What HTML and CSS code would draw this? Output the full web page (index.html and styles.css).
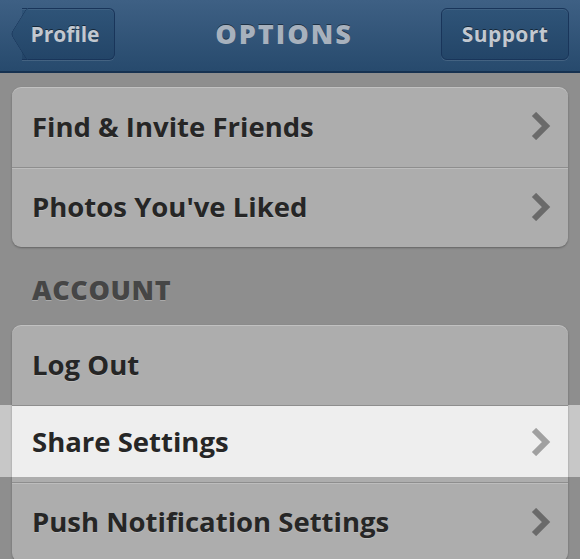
FILE: index.html
```html
<!DOCTYPE html>
<html lang="en">
<head>
  <meta charset="UTF-8">
  <title>Options</title>
  <link rel="stylesheet" href="styles.css">
</head>
<body>

  <!-- Header -->
  <div class="header">
    <button class="back-button">Profile</button>
    <div class="header-title">OPTIONS</div>
    <button class="nav-button">Support</button>
  </div>

  <!-- Main Content -->
  <div class="main">
    <div class="card">
      <div class="row">Find &amp; Invite Friends
        <svg class="chevron" viewBox="0 0 20 28"><polyline points="3,2 15,14 3,26"/></svg>
      </div>
      <div class="row">Photos You've Liked
        <svg class="chevron" viewBox="0 0 20 28"><polyline points="3,2 15,14 3,26"/></svg>
      </div>
    </div>

    <h3 class="section-title">ACCOUNT</h3>

    <div class="card">
      <div class="row">Log Out</div>
      <div class="row active">Share Settings
        <svg class="chevron" viewBox="0 0 20 28"><polyline points="3,2 15,14 3,26"/></svg>
      </div>
      <div class="row">Push Notification Settings
        <svg class="chevron" viewBox="0 0 20 28"><polyline points="3,2 15,14 3,26"/></svg>
      </div>
    </div>
  </div>

</body>
</html>
```

FILE: styles.css
```css
* {
  box-sizing: border-box;
  margin: 0;
  padding: 0;
}

body {
  font-family: 'Open Sans', Arial, sans-serif;
  background: #8e8e8e;
  height: 559px;
  overflow: hidden;
}

.header {
  height: 73px;
  background: linear-gradient(#3e6084, #274a6d);
  border-bottom: 2px solid #163150;
  display: flex;
  justify-content: space-between;
  align-items: center;
  padding: 0 11px 4px 10px;
}

.header-title {
  font-size: 27px;
  font-weight: 800;
  color: #a7b1bd;
  letter-spacing: 2px;
  text-shadow: 0 -1px 0 rgba(0, 0, 0, 0.45);
  margin-left: 12px;
}

.back-button,
.nav-button {
  font-family: inherit;
  font-size: 21px;
  font-weight: 700;
  color: #c2c8d0;
  text-shadow: 0 -1px 0 rgba(0, 0, 0, 0.5);
  background: linear-gradient(#2f5478, #234568);
  border: 1px solid #19355a;
  height: 52px;
  cursor: pointer;
  box-shadow: inset 0 1px 0 rgba(255, 255, 255, 0.08), 0 1px 0 rgba(255, 255, 255, 0.12);
}

.nav-button {
  width: 128px;
  border-radius: 6px;
  letter-spacing: 0.4px;
}

.back-button {
  position: relative;
  isolation: isolate;
  width: 93px;
  margin-left: 12px;
  padding-right: 6px;
  border-left: none;
  border-radius: 0 6px 6px 0;
}

.back-button::before {
  content: "";
  position: absolute;
  left: -14px;
  top: 6px;
  width: 37px;
  height: 37px;
  background: linear-gradient(135deg, #2f5478, #234568);
  border-left: 1px solid #19355a;
  border-bottom: 1px solid #19355a;
  border-radius: 0 0 0 6px;
  transform: scaleX(0.62) rotate(45deg);
  z-index: -1;
}

.main {
  padding: 14px 12px 0 12px;
}

.card {
  background: #adadad;
  border-radius: 9px;
  box-shadow: 0 1px 2px rgba(0, 0, 0, 0.3), inset 0 1px 0 rgba(255, 255, 255, 0.25);
}

.row {
  position: relative;
  height: 80px;
  display: flex;
  align-items: center;
  justify-content: space-between;
  padding: 0 17px 2px 20px;
  font-size: 27.5px;
  font-weight: 700;
  color: #262626;
  text-shadow: 0 1px 0 rgba(255, 255, 255, 0.2);
  border-top: 1px solid #8e8e8e;
  box-shadow: inset 0 1px 0 #bdbdbd;
}

.row:first-child {
  border-top: none;
  box-shadow: none;
}

.row.active {
  height: 72px;
  margin-bottom: 5px;
  padding-bottom: 0;
  background: #eeeeee;
  box-shadow: none;
}

.row.active::before {
  content: "";
  position: absolute;
  top: -1px;
  bottom: 0;
  left: -12px;
  right: -13px;
  background: #c7c7c7;
  z-index: -1;
}

.chevron {
  width: 20px;
  height: 28px;
  fill: none;
  stroke: #6a6a6a;
  stroke-width: 6;
  stroke-linejoin: miter;
}

.active .chevron {
  stroke: #a0a0a0;
}

.section-title {
  font-size: 27px;
  font-weight: 800;
  color: #464646;
  text-shadow: 0 1px 0 rgba(255, 255, 255, 0.25);
  padding: 27px 20px 19px 20px;
  line-height: 32px;
  letter-spacing: 0.6px;
}
```
